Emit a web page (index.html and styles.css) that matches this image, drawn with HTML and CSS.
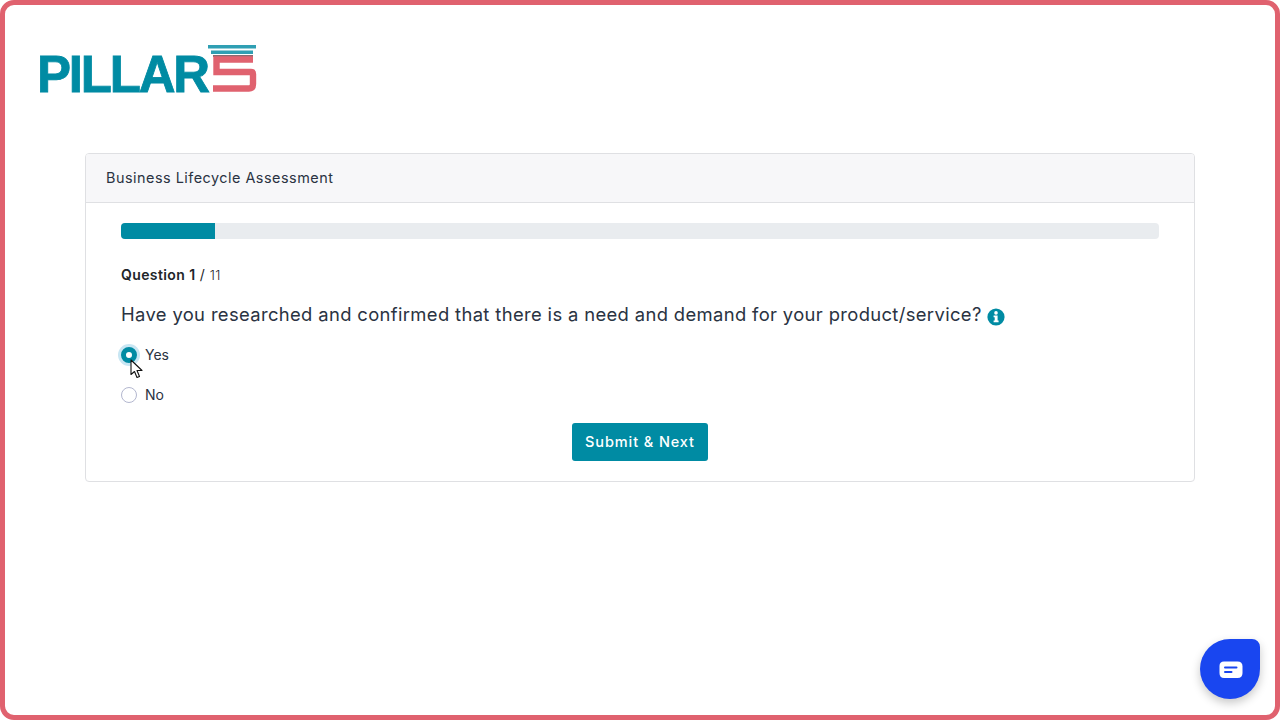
FILE: index.html
```html
<!DOCTYPE html>
<html lang="en">
<head>
<meta charset="utf-8">
<title>Business Lifecycle Assessment</title>
<link rel="stylesheet" href="styles.css">
</head>
<body>
<div class="frame">
  <header class="brand">
    <span class="brand-text">PILLAR</span>
    <svg class="brand-mark" width="49" height="49" viewBox="0 0 49 49" aria-hidden="true">
      <rect x="0" y="0" width="48" height="3.5" fill="#2f9fb3"/>
      <rect x="3" y="5.5" width="42" height="3.5" fill="#2f9fb3"/>
      <rect x="5" y="10" width="40" height="2" fill="#8a6a70"/>
      <path d="M45 14.5H8.5V27H43Q45 27 45 29V39Q45 43.5 41 43.5H5" fill="none" stroke="#e0626f" stroke-width="6.4"/>
    </svg>
  </header>
  <main class="card">
    <div class="card-header">Business Lifecycle Assessment</div>
    <div class="card-body">
      <div class="progress"><div class="progress-bar"></div></div>
      <p class="counter"><strong>Question 1</strong> / <span class="total">11</span></p>
      <h2 class="question">Have you researched and confirmed that there is a need and demand for your product/service?
        <svg class="info" width="18" height="18" viewBox="0 0 18 18" aria-hidden="true">
          <circle cx="9" cy="9" r="8.6" fill="#008ba3"/>
          <circle cx="9" cy="4.9" r="1.8" fill="#fff"/>
          <path d="M6.6 7.4H10.6V12.4H11.6V14.2H6.6V12.4H7.7V9.2H6.6Z" fill="#fff"/>
        </svg>
      </h2>
      <div class="options">
        <label class="option">
          <span class="radio checked"></span>
          <span class="option-label">Yes</span>
          <svg class="cursor" width="14" height="20" viewBox="0 0 14 20" aria-hidden="true">
            <path d="M1 1V15.5L4.5 12.5L7 18.5L9.5 17.5L7 11.5H12Z" fill="#fff" stroke="#111" stroke-width="1.1" stroke-linejoin="round"/>
          </svg>
        </label>
        <label class="option">
          <span class="radio"></span>
          <span class="option-label">No</span>
        </label>
      </div>
      <div class="actions"><button class="submit" type="button">Submit &amp; Next</button></div>
    </div>
  </main>
  <button class="chat" type="button" aria-label="Open chat">
    <svg width="24" height="18" viewBox="0 0 24 18" aria-hidden="true">
      <path d="M5 0.5H18.5Q23.5 0.5 23.5 5.5V12Q23.5 17 18.5 17H5Q0.5 17 0.5 12V5Q0.5 0.5 5 0.5Z" fill="#fff"/>
      <rect x="5" y="5.5" width="13.5" height="2" rx="1" fill="#1946f0"/>
      <rect x="5" y="10" width="8.5" height="2" rx="1" fill="#1946f0"/>
    </svg>
  </button>
</div>
</body>
</html>
```

FILE: styles.css
```css
* { box-sizing: border-box; }
html, body { margin: 0; height: 100%; }
body {
  background: #fff;
  color: #212529;
  font-family: "Inter", "Liberation Sans", sans-serif;
}
.frame {
  position: relative;
  height: 720px;
  border: 5px solid #e0626f;
  border-radius: 14px;
  padding: 40px 80px 0;
  overflow: hidden;
}
.brand {
  display: flex;
  align-items: flex-end;
  height: 49px;
  margin: 0 0 59px -48px;
}
.brand-text {
  font-family: "Liberation Sans", sans-serif;
  font-weight: 700;
  font-size: 51px;
  line-height: 38px;
  height: 38px;
  letter-spacing: -2.2px;
  color: #008ba3;
  -webkit-text-stroke: 0.8px #008ba3;
}
.card {
  width: 1110px;
  height: 329px;
  border: 1px solid #dfe0e3;
  border-radius: 4px;
}
.card-header {
  height: 49px;
  padding: 0 20px 2px;
  display: flex;
  align-items: center;
  background: #f7f7f9;
  border-bottom: 1px solid #dfe0e3;
  border-radius: 3px 3px 0 0;
  font-size: 14.4px;
  letter-spacing: 0.5px;
  color: #2a3342;
}
.card-body { padding: 20px 35px 0; }
.progress {
  height: 16px;
  background: #e9ecef;
  border-radius: 4px;
  overflow: hidden;
}
.progress-bar { width: 9.09%; height: 100%; background: #008ba3; }
.counter {
  margin: 27px 0 0;
  font-size: 14px;
  line-height: 18px;
  letter-spacing: 0.4px;
}
.counter strong { font-weight: 600; }
.total { font-size: 13px; font-weight: 300; }
.question {
  margin: 17px 0 0;
  font-size: 18.4px;
  line-height: 26px;
  font-weight: 400;
  letter-spacing: 0.36px;
  color: #2a3342;
}
.info { vertical-align: -5px; }
.options { margin-top: 18px; }
.option {
  position: relative;
  display: flex;
  align-items: center;
  gap: 8px;
  height: 20px;
  margin-bottom: 20px;
  font-size: 14px;
  color: #2a3342;
}
.option-label { padding-bottom: 2px; }
.radio {
  width: 16px;
  height: 16px;
  border: 1px solid #b3b7cf;
  border-radius: 50%;
  background: #fff;
}
.radio.checked {
  border: 5px solid #008ba3;
  box-shadow: 0 0 0 3px #c8e6f3;
}
.cursor { position: absolute; left: 9px; top: 14px; }
.actions { display: flex; justify-content: center; margin-top: -2px; }
.submit {
  width: 136px;
  height: 38px;
  border: 0;
  padding: 0 0 2px;
  border-radius: 3px;
  background: #008ba3;
  color: #fff;
  font: 500 14.5px "Inter", "Liberation Sans", sans-serif;
  letter-spacing: 0.9px;
}
.chat {
  position: absolute;
  left: 1195px;
  top: 634px;
  width: 60px;
  height: 60px;
  border: 0;
  padding: 2px 0 0 2px;
  display: flex;
  align-items: center;
  justify-content: center;
  background: #1946f0;
  border-radius: 50% 8px 50% 50%;
  box-shadow: 0 4px 10px rgba(0,0,0,.22);
}
```
